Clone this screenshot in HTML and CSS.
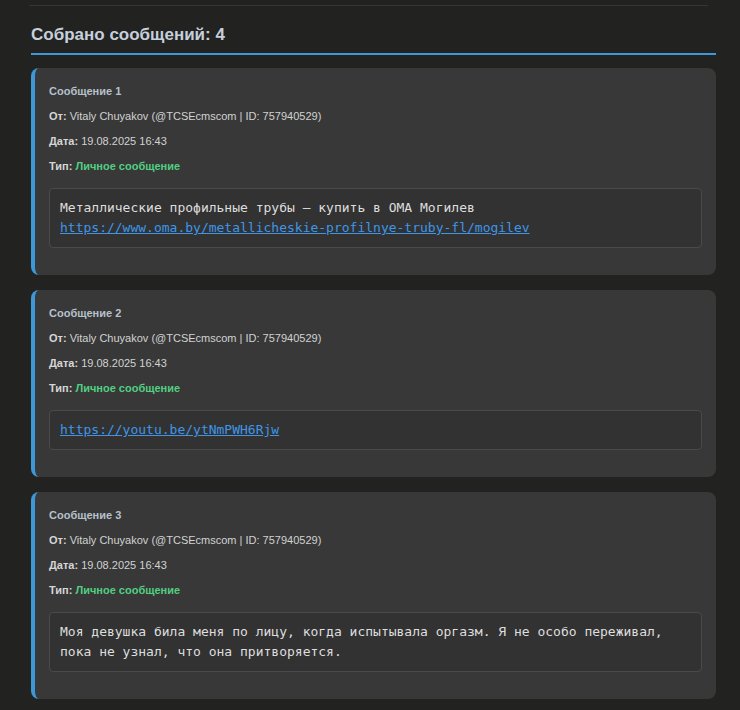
FILE: index.html
```html
<!DOCTYPE html>
<html lang="ru">
<head>
<meta charset="utf-8" />
<title>Собрано сообщений</title>
<link rel="stylesheet" href="styles.css">
</head>
<body>
<div class="divider"></div>
<div class="results">
	<h2 class="results-title">Собрано сообщений: 4</h2>

	<div class="message">
		<div class="message-title">Сообщение 1</div>
		<div class="meta"><b>От:</b> Vitaly Chuyakov (@TCSEcmscom | ID: 757940529)</div>
		<div class="meta"><b>Дата:</b> 19.08.2025 16:43</div>
		<div class="meta"><b>Тип:</b> <span class="type">Личное сообщение</span></div>
		<div class="message-text">Металлические профильные трубы — купить в ОМА Могилев<br/><a href="#">https://www.oma.by/metallicheskie-profilnye-truby-fl/mogilev</a></div>
	</div>

	<div class="message">
		<div class="message-title">Сообщение 2</div>
		<div class="meta"><b>От:</b> Vitaly Chuyakov (@TCSEcmscom | ID: 757940529)</div>
		<div class="meta"><b>Дата:</b> 19.08.2025 16:43</div>
		<div class="meta"><b>Тип:</b> <span class="type">Личное сообщение</span></div>
		<div class="message-text"><a href="#">https://youtu.be/ytNmPWH6Rjw</a></div>
	</div>

	<div class="message">
		<div class="message-title">Сообщение 3</div>
		<div class="meta"><b>От:</b> Vitaly Chuyakov (@TCSEcmscom | ID: 757940529)</div>
		<div class="meta"><b>Дата:</b> 19.08.2025 16:43</div>
		<div class="meta"><b>Тип:</b> <span class="type">Личное сообщение</span></div>
		<div class="message-text">Моя девушка била меня по лицу, когда испытывала оргазм. Я не особо переживал, пока не узнал, что она притворяется.</div>
	</div>
</div>
</body>
</html>
```

FILE: styles.css
```css
html { margin: 0 }
body {

	background: #222221;
	color: #d2d2d2;
	font-family: "Liberation Sans", Arial, sans-serif;
	margin: 0;
	padding-top: 5px;
}

/*

	line left over from the section above
*/
.divider {

	border-top: 1px solid #353535;
	margin: 0 32px 0 29px;
}

.results {

	margin: 0 24px 0 31px;
}

.results-title {

	border-bottom: 2px solid #3d98d8;
	color: #c6d0dc;
	font-size: 17px;
	line-height: 21px;
	margin: 18px 0 13px;
	padding-bottom: 8px;
}

.message {

	background: #383838;
	border-left: 4px solid #3d98d8;
	border-radius: 8px;
	margin-bottom: 15px;
	padding: 16px 14px 27px 14px;
}

.message-title {

	color: #b6c1cd;
	font-size: 11px;
	font-weight: bold;
	line-height: 14px;
	margin-bottom: 11px;
}

.meta {

	font-size: 11px;
	line-height: 14px;
	margin-bottom: 11px;
}
.meta b { color: #d6d6d6 }

.type {

	color: #52cf82;
	font-weight: bold;
}

.message-text {

	background: #323232;
	border: 1px solid #4a4a4a;
	border-radius: 4px;
	color: #dedede;
	font-family: "DejaVu Sans Mono", monospace;
	font-size: 13px;
	line-height: 20px;
	margin-top: 15px;
	padding: 9px 10px;
}

.message-text a {

	color: #3f96e8;
	text-decoration: underline;
}
```
